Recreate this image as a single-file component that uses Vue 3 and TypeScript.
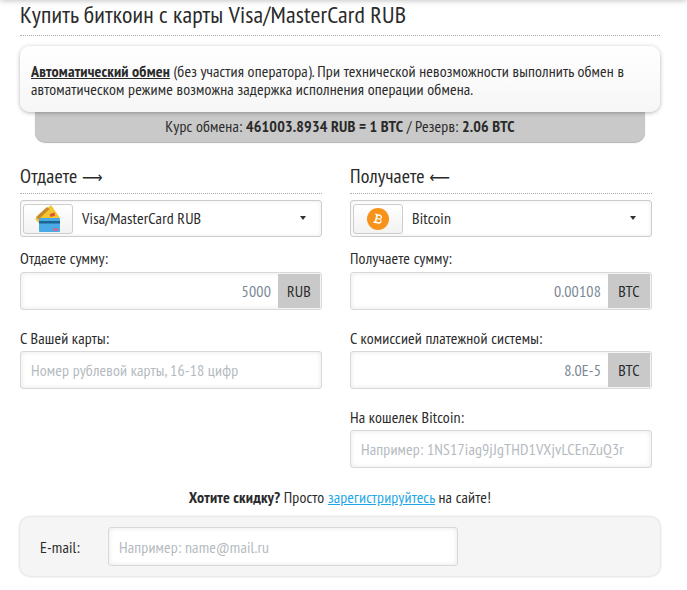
<script setup lang="ts">
const note = 'Автоматический обмен'
</script>

<template>
  <div class="page">
    <div class="topbar"></div>
    <h1 class="title">Купить биткоин с карты Visa/MasterCard RUB</h1>
    <div class="notice">
      <p><b class="under">{{ note }}</b> (без участия оператора). При технической невозможности выполнить обмен в автоматическом режиме возможна задержка исполнения операции обмена.</p>
    </div>
    <div class="rate">Курс обмена: <b>461003.8934 RUB = 1 BTC</b> / Резерв: <b>2.06 BTC</b></div>

    <div class="columns">
      <section class="col">
        <h2 class="heading">Отдаете <span class="arrow">⟶</span></h2>
        <div class="select">
          <span class="thumb">
            <svg width="30" height="28" viewBox="0 0 30 28">
              <polygon points="18,0 2,14 8,20 27,13" fill="#f2c531"/>
              <polygon points="14,2 3,12 5.5,14.5 16.5,4" fill="#c98a2a"/>
              <rect x="17" y="8.5" width="5" height="3" fill="#e0503c" transform="rotate(-20 19 10)"/>
              <rect x="6" y="13" width="21" height="14" rx="1" fill="#4aaae6"/>
              <rect x="6" y="16" width="21" height="2.5" fill="#1e6492"/>
              <rect x="20" y="23" width="5" height="3" fill="#b9729a"/>
            </svg>
          </span>
          <span class="select-text">Visa/MasterCard RUB</span>
          <span class="caret"></span>
        </div>
        <label class="label">Отдаете сумму:</label>
        <div class="field"><span class="value">5000</span><span class="unit">RUB</span></div>
        <label class="label gap">С Вашей карты:</label>
        <div class="field"><span class="placeholder">Номер рублевой карты, 16-18 цифр</span></div>
      </section>
      <section class="col">
        <h2 class="heading">Получаете <span class="arrow">⟵</span></h2>
        <div class="select">
          <span class="thumb">
            <svg width="24" height="24" viewBox="0 0 24 24">
              <circle cx="12" cy="12" r="11" fill="#f7931a"/>
              <path d="M9.2 6.6l4.2.9c2.1.5 2.8 1.6 2.5 2.9-.2 1-.9 1.5-1.8 1.6 1.1.5 1.7 1.4 1.4 2.7-.4 1.7-1.9 2.3-4 1.9l-4.3-.9.5-1.5 1 .2 1.5-6.3-1-.3zm2.6 2-.5 2.4 1.6.4c1.1.2 1.7-.1 1.9-.9.2-.8-.3-1.3-1.4-1.5zm-.8 3.5-.6 2.6 2 .4c1.2.3 1.9 0 2.1-.9.2-.9-.4-1.4-1.6-1.7z" fill="#fff"/>
            </svg>
          </span>
          <span class="select-text">Bitcoin</span>
          <span class="caret"></span>
        </div>
        <label class="label">Получаете сумму:</label>
        <div class="field"><span class="value">0.00108</span><span class="unit">BTC</span></div>
        <label class="label gap">С комиссией платежной системы:</label>
        <div class="field"><span class="value">8.0E-5</span><span class="unit">BTC</span></div>
        <label class="label gap">На кошелек Bitcoin:</label>
        <div class="field"><span class="placeholder">Например: 1NS17iag9jJgTHD1VXjvLCEnZuQ3r</span></div>
      </section>
    </div>

    <p class="promo"><b>Хотите скидку?</b> Просто <a class="link">зарегистрируйтесь</a> на сайте!</p>
    <div class="email">
      <span class="email-label">E-mail:</span>
      <div class="field email-field"><span class="placeholder">Например: name@mail.ru</span></div>
    </div>
  </div>
</template>

<style>
html, body { background: #fff; }
</style>

<style scoped>
.page {
  width: 687px;
  height: 590px;
  overflow: hidden;
  box-sizing: border-box;
  padding: 0 27px 0 20px;
  font-family: "PT Sans Narrow", "Roboto Condensed", "Noto Sans", "Roboto", sans-serif;
  font-stretch: 75%;
  font-size: 16px;
  letter-spacing: .15px;
  color: #2a2a2a;
  position: relative;
}
.topbar {
  position: absolute;
  left: 0; right: 0; top: -10px;
  height: 10px;
  box-shadow: 0 0 6px rgba(0,0,0,.3);
}
.title {
  margin: 0;
  padding-top: 1px;
  height: 34px;
  line-height: 28px;
  font-size: 24px;
  font-weight: 400;
  border-bottom: 1px dotted #aaa;
}
.notice {
  margin-top: 10px;
  height: 66px;
  box-sizing: border-box;
  border-radius: 10px;
  background: linear-gradient(#fff, #f6f6f6);
  box-shadow: 0 1px 4px rgba(0,0,0,.3);
  padding: 16px 11px 0;
  position: relative;
  z-index: 1;
  line-height: 18px;
}
.notice p { margin: 0; }
.under { text-decoration: underline; }
.rate {
  margin: 0 15px;
  height: 30px;
  line-height: 29px;
  text-align: center;
  background: #c9c9c9;
  border-radius: 0 0 10px 10px;
  box-shadow: 0 1px 1px rgba(0,0,0,.3);
}
.columns {
  display: flex;
  gap: 28px;
  margin-top: 21px;
  width: 632px;
}
.col { width: 302px; flex: none; }
.heading {
  margin: 0 0 6px;
  height: 31px;
  line-height: 26px;
  font-size: 20px;
  font-weight: 400;
  border-bottom: 1px dotted #aaa;
  box-sizing: border-box;
}
.arrow { font-family: "DejaVu Sans", sans-serif; font-size: 16px; }
.select {
  height: 37px;
  box-sizing: border-box;
  border: 1px solid #ccc;
  border-radius: 3px;
  display: flex;
  align-items: center;
  padding: 2px;
  box-shadow: inset 0 0 4px rgba(0,0,0,.08);
  position: relative;
}
.thumb {
  width: 50px;
  height: 30px;
  box-sizing: border-box;
  border: 1px solid #ccc;
  border-radius: 3px;
  background: linear-gradient(#fff, #f2f2f2);
  display: flex;
  align-items: center;
  justify-content: center;
  flex: none;
}
.select-text { margin-left: 9px; padding-bottom: 2px; }
.caret {
  position: absolute;
  right: 15px;
  top: 15px;
  width: 0; height: 0;
  border-left: 3.5px solid transparent;
  border-right: 3.5px solid transparent;
  border-top: 4px solid #333;
}
.label {
  display: block;
  margin-top: 13px;
  height: 22px;
  line-height: 16px;
}
.label.gap { margin-top: 20px; height: 21px; }
.field {
  height: 38px;
  box-sizing: border-box;
  border: 1px solid #d8d8d8;
  border-radius: 3px;
  box-shadow: inset 0 0 5px rgba(0,0,0,.1);
  display: flex;
  align-items: center;
  justify-content: flex-end;
  padding: 1px;
}
.value { color: #7a8795; padding-right: 7px; }
.unit {
  width: 42px;
  height: 34px;
  line-height: 34px;
  text-align: center;
  background: #c9c9c9;
  flex: none;
}
.placeholder {
  color: #b4bac0;
  margin-right: auto;
  padding-left: 9px;
  white-space: nowrap;
}
.promo {
  margin: 20px 0 11px;
  text-align: center;
  line-height: 18px;
}
.link { color: #1ea7e8; text-decoration: underline; }
.email {
  height: 59px;
  box-sizing: border-box;
  background: #f5f5f5;
  border-radius: 10px;
  box-shadow: 0 0 3px rgba(0,0,0,.25);
  display: flex;
  align-items: center;
  padding-left: 20px;
}
.email-label { width: 68px; flex: none; }
.email-field { width: 350px; height: 39px; background: #fff; }
</style>
